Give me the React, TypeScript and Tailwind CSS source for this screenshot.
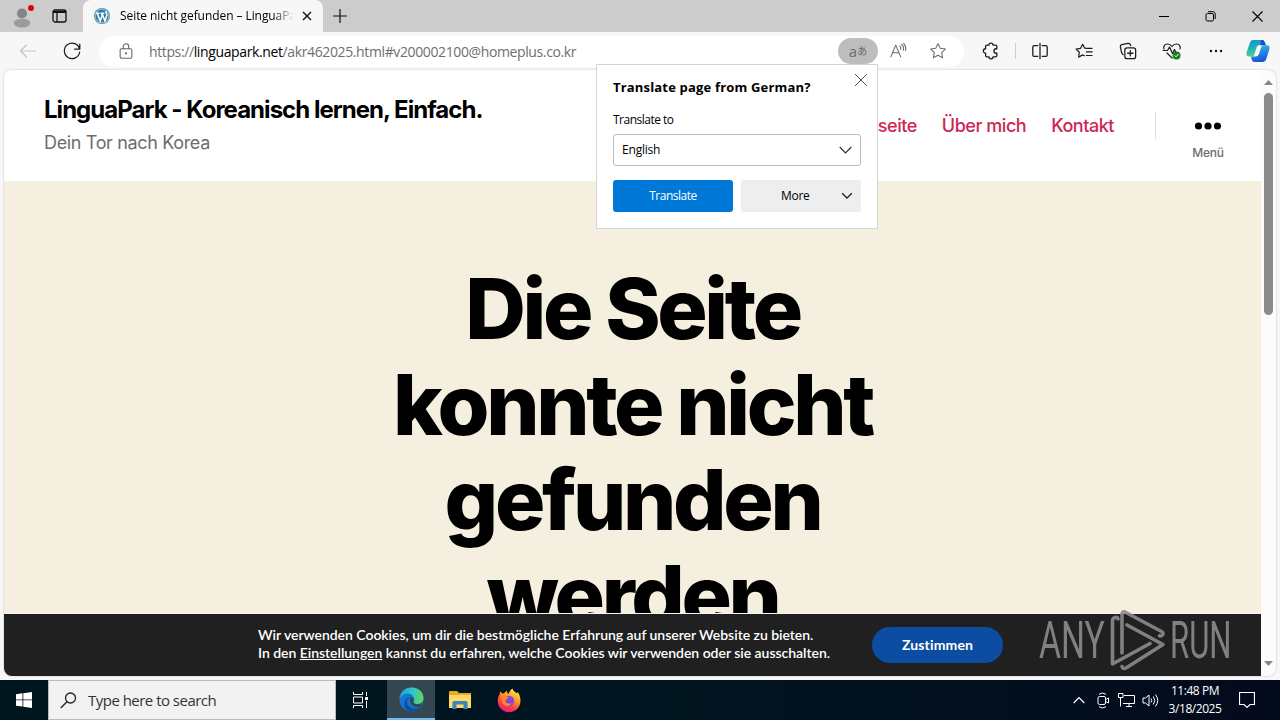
import type { ReactNode } from 'react';

const UI = "font-['Open_Sans','Noto_Sans',sans-serif]";

function Icon({ size = 20, className = '', children }: { size?: number; className?: string; children: ReactNode }) {
  return (
    <svg
      width={size}
      height={size}
      viewBox="0 0 20 20"
      fill="none"
      stroke="currentColor"
      strokeWidth="1.2"
      strokeLinecap="round"
      strokeLinejoin="round"
      className={`shrink-0 ${className}`}
    >
      {children}
    </svg>
  );
}

function WordPressIcon() {
  return (
    <svg width="16" height="16" viewBox="0 0 16 16" className="shrink-0">
      <circle cx="8" cy="8" r="8" fill="#2d7ba6" />
      <circle cx="8" cy="8" r="7" fill="none" stroke="#d7e8f1" strokeWidth="0.8" />
      <path d="M2 5.2h3.6M6.6 5.2h3.8M3.2 5.4l3 7.6 2-5.6-.8-2M8.2 5.4l2.7 7.6 2-6c.3-1.3-1.6-2.2-.8-4" fill="none" stroke="#fff" strokeWidth="1.5" />
    </svg>
  );
}

function TabStrip() {
  return (
    <div className="flex h-8 shrink-0 bg-[#cccccc]">
      <div className="flex w-[83px] items-center rounded-br-md pl-3">
        <svg width="24" height="26" viewBox="0 0 24 26">
          <circle cx="10" cy="10.5" r="5" fill="#858585" />
          <path d="M2 20c0-3 3-4 8-4s8 1 8 4c0 2.500-3 4.500-8 4.500S2 22.500 2 20z" fill="#9b9b9b" />
          <circle cx="19" cy="5" r="3" fill="#e3000f" />
        </svg>
        <svg width="15" height="14" viewBox="0 0 15 14" fill="none" stroke="#111" className="ml-[16px]">
          <rect x="1" y="1" width="13" height="12" rx="2" strokeWidth="1.3" />
          <path d="M1 3h13" strokeWidth="2" />
          <path d="M5 3v10" strokeWidth="1.3" />
        </svg>
      </div>
      <div className="flex w-[240px] items-center rounded-t-lg bg-[#f7f7f7] pl-[11px]">
        <WordPressIcon />
        <div className={`ml-[10px] w-[174px] overflow-hidden whitespace-nowrap text-[12px] tracking-[-0.07px] text-black [mask-image:linear-gradient(to_right,#000_88%,transparent)] ${UI}`}>
          Seite nicht gefunden – LinguaPark
        </div>
        <svg width="10" height="10" viewBox="0 0 10 10" stroke="#111" strokeWidth="1.4" className="ml-[8px]">
          <path d="M1 1l8 8M9 1l-8 8" />
        </svg>
      </div>
      <svg width="14" height="14" viewBox="0 0 14 14" stroke="#111" strokeWidth="1.2" className="mt-[9px] ml-[10px]">
        <path d="M7 0v14M0 7h14" />
      </svg>
      <div className="mr-[17px] ml-auto flex items-center gap-9 text-black">
        <svg width="10" height="10" viewBox="0 0 10 10" stroke="currentColor">
          <path d="M0 5.500h10" />
        </svg>
        <svg width="11" height="11" viewBox="0 0 11 11" fill="none" stroke="currentColor">
          <rect x="1" y="2.500" width="7.500" height="7.500" rx="1.500" />
          <path d="M3 .7h5c1.300 0 2.200 1 2.200 2.300v5" />
        </svg>
        <svg width="11" height="11" viewBox="0 0 11 11" stroke="currentColor" strokeWidth="1.1">
          <path d="M.5.5l10 10M10.500.5l-10 10" />
        </svg>
      </div>
    </div>
  );
}

function CopilotIcon() {
  return (
    <svg width="24" height="24" viewBox="0 0 24 24" className="shrink-0">
      <defs>
        <linearGradient id="cpA" x1="0" y1="0" x2="0.3" y2="1">
          <stop offset="0" stopColor="#1d8ad8" />
          <stop offset="0.5" stopColor="#1eb0b8" />
          <stop offset="1" stopColor="#4fd08a" />
        </linearGradient>
        <linearGradient id="cpB" x1="0" y1="0" x2="0.3" y2="1">
          <stop offset="0" stopColor="#35c5f4" />
          <stop offset="1" stopColor="#1a55d8" />
        </linearGradient>
      </defs>
      <path d="M7 1h9c2 0 2.500 1.500 3 3l.6 2H14c-2 0-3 1-3.600 3l-2 6.500C8 17 7 17.500 5.500 17.500H3C.7 17.500 0 15.500.6 13.500L3.800 4C4.500 2 5.500 1 7 1z" fill="url(#cpA)" />
      <path d="M17 23H8.500c-2 0-2.500-1.500-3-3L5 17.500h4.500c2 0 3-1 3.600-3l2-6c.5-1.500 1.400-2.200 2.900-2.200h3c2.300 0 3 2 2.400 4L20.200 20c-.7 2-1.700 3-3.200 3z" fill="url(#cpB)" />
      <path d="M16 1c2 0 2.500 1.500 3 3l.8 2.300H14L15 1z" fill="#1552c8" />
    </svg>
  );
}

function Toolbar() {
  return (
    <div className="flex h-[38px] shrink-0 items-center bg-[#f7f7f7] text-[#1b1b1b]">
      <Icon className="ml-[18px] text-[#c4c4c4]">
        <path d="M17.500 10H2.500M8.500 4L2.500 10l6 6" />
      </Icon>
      <Icon className="ml-6" size={20}>
        <path d="M17.600 8.200A7.700 7.700 0 1 0 17.700 11M17.800 3v5.200h-5.200" strokeWidth="1.2" />
      </Icon>
      <div className="ml-[17px] flex h-[31px] w-[865px] items-center rounded-full bg-white">
        <Icon size={18} className="ml-[18px] text-[#666]">
          <rect x="3.500" y="7.500" width="13" height="10.500" rx="1.500" />
          <path d="M7 7.500V5a3 3 0 0 1 6 0v2.500" />
          <circle cx="10" cy="12.700" r=".6" fill="currentColor" />
        </Icon>
        <div className={`ml-[14px] w-[440px] text-[14px] tracking-[-0.38px] whitespace-nowrap text-[#6e6e6e] ${UI}`}>
          https://<span className="text-black">linguapark.net</span>/akr462025.html#v200002100@homeplus.co.kr
        </div>
        <div className="mr-[17px] ml-auto flex items-center text-[#6b6b6b]">
          <div className="flex h-[26px] w-10 items-center justify-center rounded-full bg-[#bdbdbd] font-['Open_Sans','Noto_Sans_CJK_JP',sans-serif] text-[15px] leading-none text-[#6b6b6b]">
            a<span className="text-[10px]">あ</span>
          </div>
          <Icon size={18} className="ml-[11px]">
            <path d="M2 16.500L7.500 3.500 13 16.500M4 12h7M12 4.500q1.500 1.500 1 4M14 2.500q2.800 2.500 2 6.500M16.300 1.500q3.200 3.500 2 8" />
          </Icon>
          <Icon size={18} className="ml-[22px]">
            <path d="M10 1.800l2.500 5.200 5.700.8-4.100 4 1 5.700L10 14.800l-5.100 2.700 1-5.700-4.100-4 5.700-.8z" />
          </Icon>
        </div>
      </div>
      <div className="ml-[18px] flex items-center">
        {/* puzzle piece, notches on the right */}
        <Icon size={18}>
          <path
            d="M5.500 3.500h2.200a2.300 2.300 0 0 1 4.600 0H15q1.500 0 1.500 1.500v2.500h-.7a2.300 2.300 0 0 0 0 5h.7V15q0 1.500-1.500 1.500h-2.700a2.300 2.300 0 0 1-4.600 0H5.500Q4 16.500 4 15v-2.500a2.400 2.400 0 0 1 0-5V5q0-1.500 1.500-1.500z"
            strokeWidth="1.4"
          />
        </Icon>
        <div className="ml-[15px] h-4 w-px bg-[#cfcfcf]" />
        <Icon size={18} className="ml-[15px]">
          <path d="M10 1.500v17M7.500 4H3.500Q2 4 2 5.500v9Q2 16 3.500 16h4M12.500 4h4Q18 4 18 5.500v9q0 1.500-1.500 1.500h-4" strokeWidth="1.4" />
        </Icon>
        <Icon size={18} className="ml-[26px]">
          <path d="M12 7L10.500 6.500 8.500 2.500 6.200 7l-5 .8 3.600 3.600L4 16.800l4.500-2.500 1.800 1M12 7h7M12.500 11H19M12.500 15H19" strokeWidth="1.3" />
        </Icon>
        <Icon size={18} className="ml-[26px]">
          <rect x="6.500" y="6.500" width="12" height="12" rx="2.500" strokeWidth="1.4" />
          <path d="M12.500 9.500v6M9.500 12.500h6M4.500 14Q3.500 13.500 3 12L1.500 5.500Q1.200 3.500 3 3l7-1.500q2-.3 2.700 1.500l.3 1" strokeWidth="1.4" />
        </Icon>
        <Icon size={20} className="ml-[25px]">
          <path d="M10 17L5 12M2 8C1 5 3 3 5.500 3 7.500 3 9 4 10 5.500 11 4 12.500 3 14.500 3 17 3 19 5 18 8M1 9.500h4.500L7.500 6l3 6.500 2-4 1.200 2.500" strokeWidth="1.2" />
          <circle cx="14.500" cy="14.500" r="4" fill="#197d20" stroke="none" />
          <path d="M12.700 14.500l1.300 1.300 2.300-2.500" stroke="#fff" strokeWidth="1" />
        </Icon>
        <svg width="14" height="4" viewBox="0 0 14 4" fill="#111" className="ml-[27px]">
          <circle cx="2" cy="2" r="1.200" />
          <circle cx="7" cy="2" r="1.200" />
          <circle cx="12" cy="2" r="1.200" />
        </svg>
        <div className="ml-[23px]">
          <CopilotIcon />
        </div>
      </div>
    </div>
  );
}

function SiteHeader() {
  return (
    <header className="flex h-[111px] shrink-0 items-start bg-white pl-10 font-['Inter',sans-serif]">
      <div>
        <div className="pt-[25px] text-[24px] leading-[30px] font-bold tracking-[-0.97px] whitespace-nowrap text-black">
          LinguaPark - Koreanisch lernen, Einfach.
        </div>
        <div className="mt-[6px] text-[18px] leading-6 tracking-[-0.35px] text-[#6d6d6d]">Dein Tor nach Korea</div>
      </div>
      <nav className="mt-[44px] ml-auto flex gap-[25px] text-[18px] leading-6 font-medium tracking-[-0.46px] whitespace-nowrap text-[#cd2653]">
        <a>Startseite</a>
        <a>Über mich</a>
        <a>Kontakt</a>
      </nav>
      <div className="mt-[42px] ml-[41px] h-[27px] w-px bg-[#dedede]" />
      <div className="mt-[52px] mr-[37px] ml-[36px] flex w-8 flex-col items-center">
        <svg width="26" height="8" viewBox="0 0 26 8">
          <circle cx="3.500" cy="4" r="3.600" />
          <circle cx="13" cy="4" r="3.600" />
          <circle cx="22.500" cy="4" r="3.600" />
        </svg>
        <span className="mt-[15px] text-[12px] leading-4 font-medium tracking-[-0.2px] text-[#6d6d6d]">Menü</span>
      </div>
    </header>
  );
}

function CookieBar() {
  return (
    <div className="flex h-[63px] shrink-0 items-center border-t border-[#f5f5f5] bg-[#202020] pl-[254px] text-white">
      <div className="-mt-[3px] w-[574px] font-['Lato',sans-serif] text-[14px] leading-[18px] font-semibold tracking-[-0.03px] whitespace-nowrap">
        <p>Wir verwenden Cookies, um dir die bestmögliche Erfahrung auf unserer Website zu bieten.</p>
        <p>
          In den <span className="underline">Einstellungen</span> kannst du erfahren, welche Cookies wir verwenden oder sie ausschalten.
        </p>
      </div>
      <button className="ml-10 h-9 w-[131px] rounded-full bg-[#0c4da2] pb-[2px] font-['Lato',sans-serif] text-[14px] font-bold tracking-[0.15px]">
        Zustimmen
      </button>
    </div>
  );
}

function TranslatePopup() {
  return (
    <div className={`absolute top-16 left-[596px] h-[165px] w-[282px] border border-[#d4d4d4] bg-white px-4 text-[12px] text-black ${UI}`}>
      <div className="flex justify-between">
        <div className="mt-[13px] text-[13px] leading-[18px] font-bold tracking-[0.18px] whitespace-nowrap">Translate page from German?</div>
        <svg width="12" height="12" viewBox="0 0 12 12" stroke="#555" className="mt-[9px] -mr-[6px]">
          <path d="M0 0l12 12M12 0L0 12" />
        </svg>
      </div>
      <div className="mt-4 leading-4 tracking-[-0.5px]">Translate to</div>
      <div className="mt-[6px] flex h-8 items-center justify-between rounded-[3px] border border-[#bdbdbd] px-2">
        <span className="tracking-[-0.2px]">English</span>
        <svg width="13" height="8" viewBox="0 0 13 8" fill="none" stroke="#333" strokeWidth="1.2">
          <path d="M.7 1l5.800 5.800L12.300 1" />
        </svg>
      </div>
      <div className="mt-[14px] flex gap-2">
        <button className="h-8 w-[120px] rounded-[3px] bg-[#0078d7] tracking-[-0.5px] text-white">Translate</button>
        <button className="flex h-8 w-[120px] items-center rounded-[3px] bg-[#eeeeee] pr-[8px] pl-10 tracking-[-0.3px]">
          More
          <svg width="12" height="8" viewBox="0 0 12 8" fill="none" stroke="#222" strokeWidth="1.3" className="ml-auto">
            <path d="M1.200 1.300L6 6l4.800-4.700" />
          </svg>
        </button>
      </div>
    </div>
  );
}

function Watermark() {
  return (
    <div className="absolute top-[609px] left-[1039px] flex h-[64px] w-[192px] items-center text-[#8b8b8b] opacity-90">
      <div className="w-[70px]">
        <span className="block origin-left scale-x-[0.66] font-['Roboto',sans-serif] text-[51px] leading-[62px]">ANY</span>
      </div>
      <svg width="58" height="64" viewBox="0 -1 58 64" fill="none" stroke="currentColor" strokeWidth="3.600" strokeLinejoin="round" strokeLinecap="round" className="shrink-0">
        <path d="M9 9Q8.500 7 6 7.500 3.500 8 3.500 11V54L41 33.500" />
        <path d="M13 43V4q.5-3 3-2L52.500 21.500q2.500 1.500 1 3.500-1.200 1.500-3 .8" />
        <path d="M18 15L54 34.500 17 58q-3 1.500-4-1.500" />
      </svg>
      <div className="w-[62px] pl-[3px]">
        <span className="block origin-left scale-x-[0.61] font-['Roboto',sans-serif] text-[51px] leading-[62px]">RUN</span>
      </div>
    </div>
  );
}

function Taskbar() {
  return (
    <div className="flex h-10 shrink-0 items-center bg-gradient-to-r from-[#00161f] via-[#00151f] to-[#030a1c] text-white">
      <div className="flex w-12 justify-center">
        <svg width="16" height="16" viewBox="0 0 16 16" fill="#fff">
          <path d="M0 2.200l6.500-.9v6.200H0zM7.300 1.200L16 0v7.500H7.300zM0 8.300h6.500v6.300L0 13.700zM7.300 8.300H16V16l-8.700-1.200z" />
        </svg>
      </div>
      <div className="flex h-10 w-72 items-center border border-[#bbbbbb] bg-[#f2f2f2] pl-[11px] text-[#333]">
        <svg width="17" height="17" viewBox="0 0 17 17" fill="none" stroke="#222" strokeWidth="1.3">
          <circle cx="10.500" cy="6" r="5" />
          <path d="M7 9.700L.7 16" />
        </svg>
        <span className={`ml-[11px] text-[15px] tracking-[-0.52px] whitespace-nowrap ${UI}`}>Type here to search</span>
      </div>
      <div className="flex w-[49px] justify-center">
        <svg width="17" height="16" viewBox="0 0 17 16" fill="none" stroke="#fff">
          <path d="M1.500 0v2.500h9V0M1.500 16v-2.500h9V16M1.500 5h9v6h-9zM14.500 0v4M14.500 9v7" />
          <path d="M13 5h3v3h-3z" fill="#fff" stroke="none" />
        </svg>
      </div>
      <div className="ml-[2px] flex h-10 w-12 items-center justify-center border-b-2 border-[#76b9ed] bg-[#344750]">
        <svg width="25" height="25" viewBox="0 0 25 25">
          <defs>
            <linearGradient id="edA" x1="0" y1="0.4" x2="1" y2="0.5">
              <stop offset="0" stopColor="#249fd7" />
              <stop offset="0.5" stopColor="#2cc3d2" />
              <stop offset="1" stopColor="#67d657" />
            </linearGradient>
          </defs>
          <circle cx="12.500" cy="12.500" r="12" fill="#1377cf" />
          <path d="M.6 12C1 5 6 .5 12.500.5 19.500.5 24.500 5 24.500 11c0 4-3 6-6.500 6-2.500 0-4-1-3.600-2 1.500-2 1.300-5-1.400-7C9 5 3 7 .6 12z" fill="url(#edA)" />
          <path d="M11 10c-3 2-4 5-2 8 2.500 4 8 4.500 13 1.500-3 5-9 6.500-14 3.500C3.500 20 4.500 11.500 11 10z" fill="#0b4f9e" />
          <path d="M12 10.300c2 .4 3 2 2.600 3.700-.8 1.500 1 3.200 3.800 3.200 2 0 3.700-.7 5-1.800-.8 2.500-1.400 3.600-2.400 4.600C16 21 11.500 18 11 14.500c-.2-2 .2-3 1-4.200z" fill="#344750" />
        </svg>
      </div>
      <svg width="22" height="20" viewBox="0 0 22 20" className="ml-[14px]">
        <path d="M0 2q0-1 1-1h7l2 2h12v15H0z" fill="#e9a92a" />
        <path d="M0 5h22v13H0z" fill="#ffd867" />
        <path d="M3.500 19v-6.500q0-1.500 1.500-1.500h12q1.500 0 1.500 1.500V19h-4v-4.500h-7V19z" fill="#3987bb" />
        <path d="M8 15.500h6V18H8z" fill="#ffd867" />
      </svg>
      <svg width="24" height="25" viewBox="0 0 24 25" className="ml-[26px]">
        <defs>
          <linearGradient id="fxA" x1="0.8" y1="0" x2="0.3" y2="1">
            <stop offset="0" stopColor="#fff14a" />
            <stop offset="0.4" stopColor="#ff9a28" />
            <stop offset="0.7" stopColor="#ff4146" />
            <stop offset="1" stopColor="#e31587" />
          </linearGradient>
        </defs>
        <path d="M15.500.5c.5 2.500 3 3.500 4.500 5l.5-1.500c2 2 3 5.500 3 8.500 0 7-5 11.700-11.500 11.700S.7 19 .7 13c0-3 .8-5 2-6.500L3 3.500l3 2.300L8 4.500c.5-1 1.500-1.500 2-1.700-.2 1.200.3 2.200 1.500 3.200 1-2.500 2-4.500 4-5.500z" fill="url(#fxA)" />
        <circle cx="12" cy="13" r="5.200" fill="#8844dd" />
        <path d="M5 9c3-1.500 5-1 7 1-2 .2-3 1.500-3.500 3 0 2.500 4 3.500 6 2-1.500 4-7 4-9 0C4.700 13 4.500 11 5 9z" fill="#ff8a24" />
      </svg>
      <div className="mr-[25px] ml-auto flex items-center">
        <svg width="12" height="8" viewBox="0 0 12 8" fill="none" stroke="#fff" strokeWidth="1.2">
          <path d="M.7 7L6 1.500 11.300 7" />
        </svg>
        <svg width="13" height="17" viewBox="0 0 13 17" fill="none" stroke="#fff" className="ml-[12px]">
          <rect x="1" y="4.500" width="7.500" height="8" rx="1.500" />
          <path d="M8.500 7.500L11.500 6v5L8.500 9.500M2 2.300q3.500-2.600 7 0M2 14.700q3.500 2.600 7 0" />
        </svg>
        <svg width="17" height="14" viewBox="0 0 17 14" fill="none" stroke="#fff" className="ml-[8px]">
          <path d="M6 2.500h10.500v8H5M8 13.500h6M11 10.500v3M.5.5h4.500v4H.5zM2.500 4.500v9" />
        </svg>
        <svg width="17" height="15" viewBox="0 0 17 15" fill="none" stroke="#fff" className="ml-[7px]">
          <path d="M1 5h2.500L7 2v11L3.500 10H1zM9 5.500q1.500 2 0 4M11.300 3.500q3 4 0 8M13.500 1.500q4.500 6 0 12" />
        </svg>
        <div className={`ml-[9px] w-[54px] text-center text-[12px] leading-[18px] tracking-[-0.45px] whitespace-nowrap ${UI}`}>
          <div>11:48 PM</div>
          <div>3/18/2025</div>
        </div>
        <svg width="16" height="17" viewBox="0 0 16 17" fill="none" stroke="#fff" className="ml-[17px]">
          <path d="M.5.5h15v12H11L8 15.500 5 12.500H.5z" strokeWidth="1.2" />
        </svg>
      </div>
    </div>
  );
}

export default function App() {
  return (
    <div className="relative flex h-[720px] w-[1280px] flex-col overflow-hidden bg-[#f7f7f7]">
      <TabStrip />
      <Toolbar />
      <div className="mx-1 mb-1 flex min-h-0 flex-1 overflow-hidden rounded-lg bg-[#fcfcfc] shadow-[0_0_2px_rgba(0,0,0,0.25)]">
        <div className="flex w-[1257px] flex-col">
          <SiteHeader />
          <main className="min-h-0 flex-1 overflow-hidden bg-[#f5efe0] pt-[80px]">
            <h1 className="text-center font-['Inter',sans-serif] text-[84px] leading-[95.6px] font-extrabold tracking-[-3.36px] text-black">
              Die Seite
              <br />
              konnte nicht
              <br />
              gefunden
              <br />
              werden
            </h1>
          </main>
          <CookieBar />
        </div>
        <div className="flex flex-1 flex-col items-center pt-[10px] pb-[10px]">
          <svg width="9" height="5" viewBox="0 0 9 5" fill="#858585">
            <path d="M4.500 0L9 5H0z" />
          </svg>
          <div className="mt-2 h-[222px] w-[9px] rounded-full bg-[#8b8b8b]" />
          <svg width="9" height="5" viewBox="0 0 9 5" fill="#858585" className="mt-auto">
            <path d="M4.500 5L9 0H0z" />
          </svg>
        </div>
      </div>
      <Taskbar />
      <TranslatePopup />
      <Watermark />
    </div>
  );
}
